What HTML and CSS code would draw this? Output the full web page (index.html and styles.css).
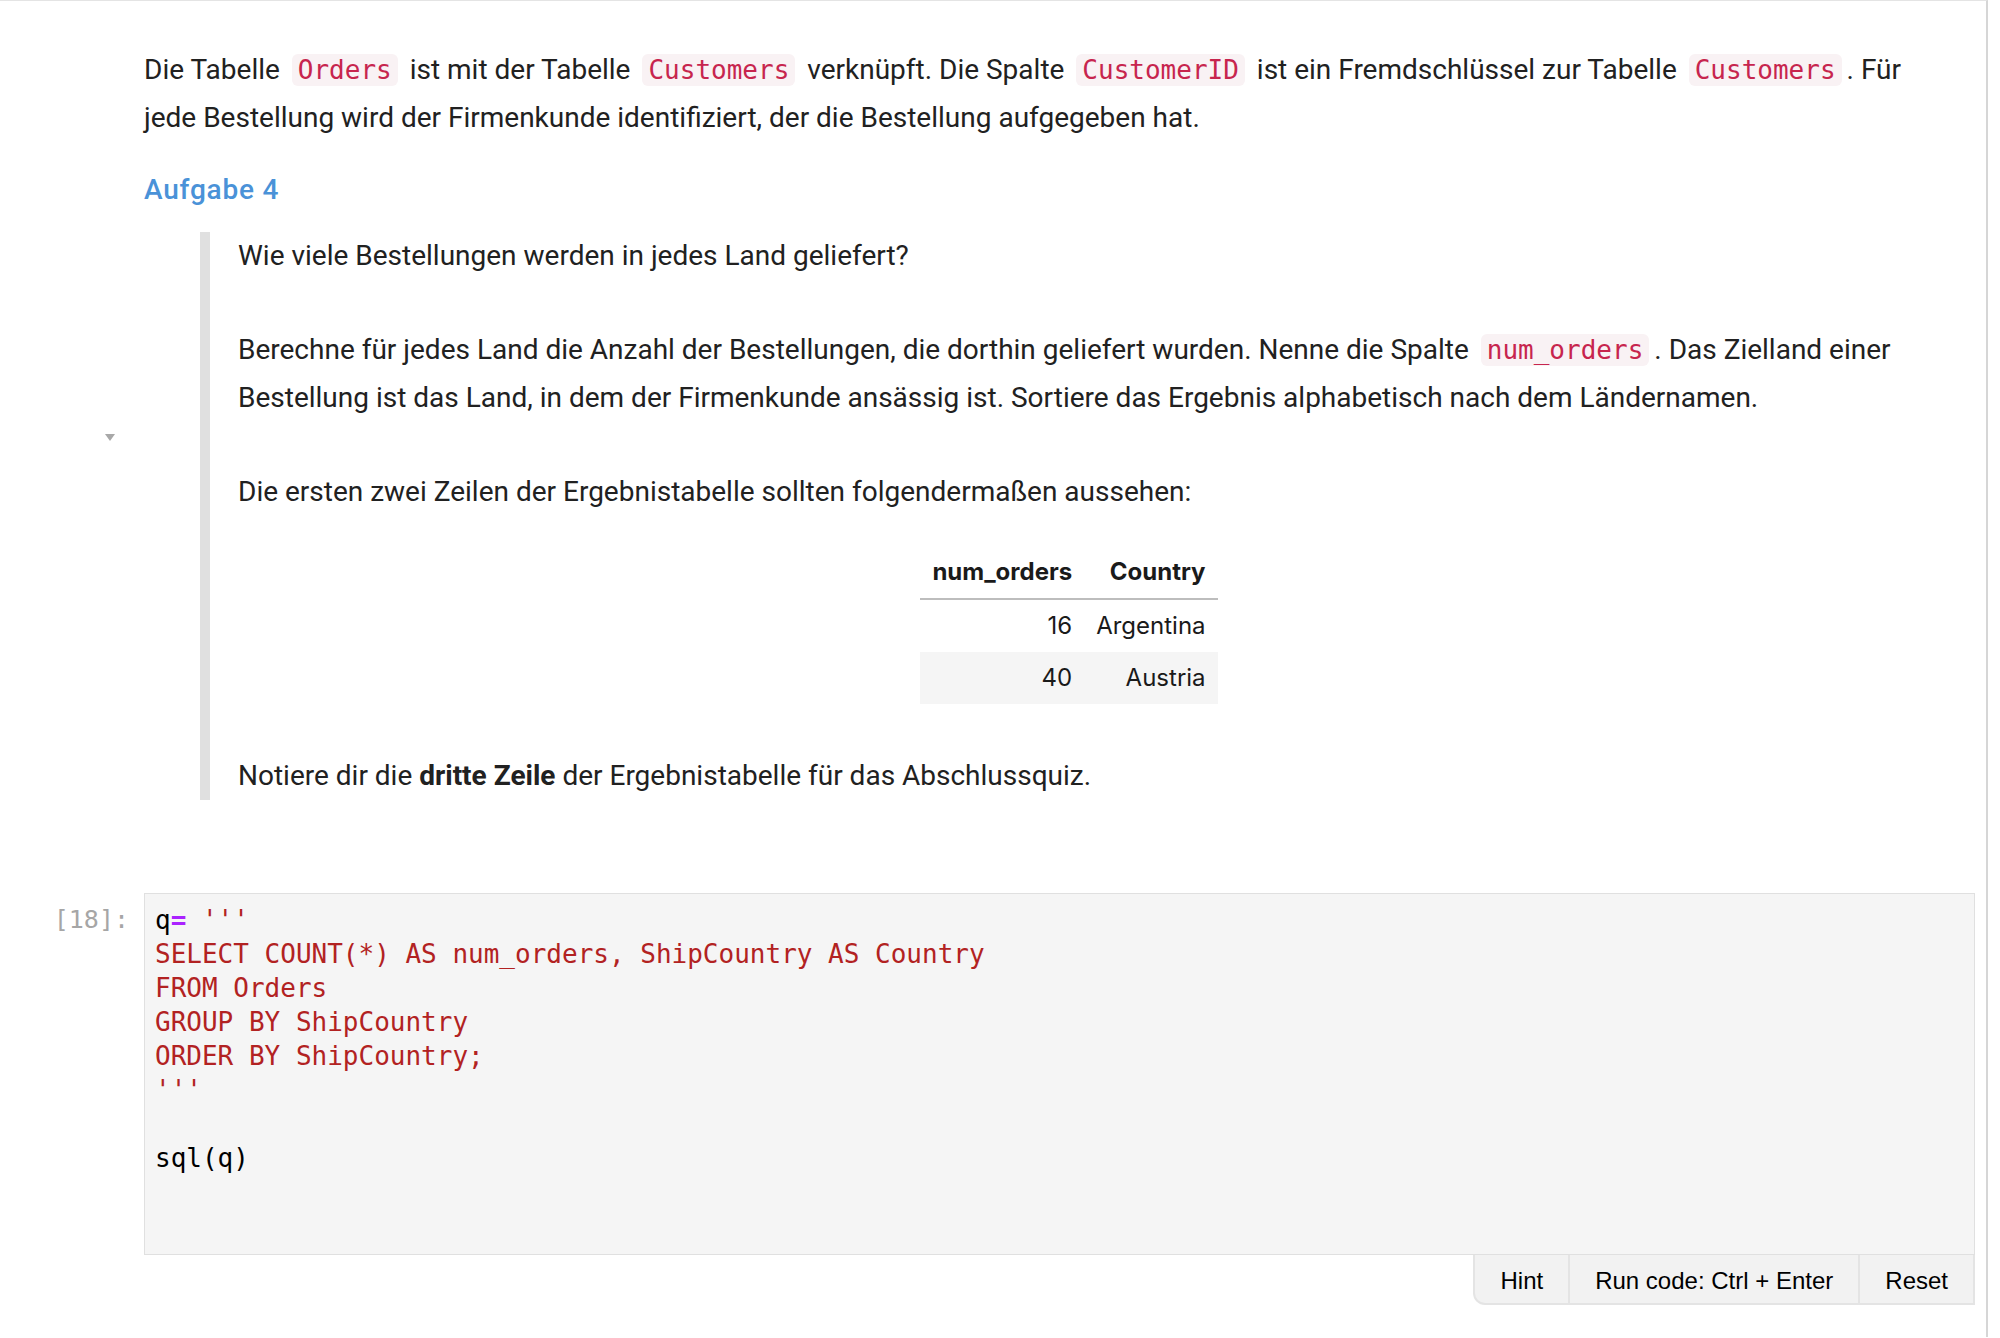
FILE: index.html
```html
<!DOCTYPE html>
<html lang="de">
<head>
<meta charset="utf-8">
<title>Notebook</title>
<link rel="stylesheet" href="styles.css">
</head>
<body>
<div class="panel">
  <div class="cell md-cell">
    <div class="gutter"><span class="caret"></span></div>
    <div class="md">
      <p>Die Tabelle <code>Orders</code> ist mit der Tabelle <code>Customers</code> verknüpft. Die Spalte <code>CustomerID</code> ist ein Fremdschlüssel zur Tabelle <code>Customers</code>. Für jede Bestellung wird der Firmenkunde identifiziert, der die Bestellung aufgegeben hat.</p>
      <h4 class="task">Aufgabe 4</h4>
      <blockquote class="quote">
        <p class="qp">Wie viele Bestellungen werden in jedes Land geliefert?</p>
        <p class="qp">Berechne für jedes Land die Anzahl der Bestellungen, die dorthin geliefert wurden. Nenne die Spalte <code>num_orders</code>. Das Zielland einer Bestellung ist das Land, in dem der Firmenkunde ansässig ist. Sortiere das Ergebnis alphabetisch nach dem Ländernamen.</p>
        <p class="qp">Die ersten zwei Zeilen der Ergebnistabelle sollten folgendermaßen aussehen:</p>
        <table class="result">
          <thead>
            <tr><th>num_orders</th><th>Country</th></tr>
          </thead>
          <tbody>
            <tr><td>16</td><td>Argentina</td></tr>
            <tr><td>40</td><td>Austria</td></tr>
          </tbody>
        </table>
        <p class="qp last">Notiere dir die <strong>dritte Zeile</strong> der Ergebnistabelle für das Abschlussquiz.</p>
      </blockquote>
    </div>
  </div>
  <div class="cell code-cell">
    <div class="prompt">[18]:</div>
    <div class="code-wrap">
<pre class="code"><span class="var">q</span><span class="op">=</span> <span class="str">'''</span>
<span class="str">SELECT COUNT(*) AS num_orders, ShipCountry AS Country</span>
<span class="str">FROM Orders</span>
<span class="str">GROUP BY ShipCountry</span>
<span class="str">ORDER BY ShipCountry;</span>
<span class="str">'''</span>

<span class="var">sql(q)</span>


</pre>
      <div class="buttons">
        <button class="btn first">Hint</button>
        <button class="btn">Run code: Ctrl + Enter</button>
        <button class="btn">Reset</button>
      </div>
    </div>
  </div>
</div>
</body>
</html>
```
FILE: styles.css
```css
html, body {
  margin: 0;
  padding: 0;
  background: #ffffff;
}

body {
  font-family: Roboto, "Noto Sans", sans-serif;
  color: #212121;
}

.panel {
  width: 1988px;
  min-height: 1337px;
  box-sizing: border-box;
  border-top: 1px solid #e4e4e4;
  border-right: 2px solid #d6d6d6;
}

.cell {
  display: flex;
}

.gutter {
  width: 144px;
  flex: none;
  display: flex;
  align-items: center;
  justify-content: flex-end;
  box-sizing: border-box;
  padding-right: 29px;
}

.caret {
  width: 0;
  height: 0;
  border-left: 5px solid transparent;
  border-right: 5px solid transparent;
  border-top: 7px solid #a8a8a8;
}

.md {
  width: 1800px;
  padding: 45px 0 74px;
  font-size: 28px;
  line-height: 48px;
}

.md p {
  margin: 0;
}

.md code {
  font-family: "DejaVu Sans Mono", monospace;
  font-size: 26px;
  line-height: 30px;
  color: #c7254e;
  background: #f9f2f4;
  padding: 1px 6px;
  margin: 0 5px;
  border-radius: 6px;
}

.task {
  margin: 24px 0 0;
  font-size: 28px;
  line-height: 48px;
  font-weight: 500;
  letter-spacing: 0.8px;
  color: #4a92d8;
}

.quote {
  margin: 18px 16px 0 56px;
  padding: 0 28px;
  border-left: 10px solid #e0e0e0;
}

.md .qp + .qp {
  margin-top: 46px;
}

.result {
  margin: 30px auto 48px;
  border-collapse: collapse;
  font-family: Inter, Roboto, sans-serif;
  font-size: 24px;
  line-height: 28px;
  color: #1a1a1a;
}

.result th,
.result td {
  padding: 12px 12px;
  text-align: right;
}

.result th {
  font-weight: 700;
  border-bottom: 2px solid #bdbdbd;
}

.result tbody tr:nth-child(even) {
  background: #f5f5f5;
}

.code-cell {
  margin-top: 19px;
}

.prompt {
  width: 144px;
  flex: none;
  box-sizing: border-box;
  padding: 10px 15px 0 0;
  text-align: right;
  font-family: "DejaVu Sans Mono", monospace;
  font-size: 25px;
  line-height: 34px;
  color: #a6a6a6;
}

.code-wrap {
  width: 1831px;
  display: flex;
  flex-direction: column;
}

.code {
  margin: 0;
  padding: 9px 10px 11px;
  border: 1px solid #e0e0e0;
  background: #f5f5f5;
  font-family: "DejaVu Sans Mono", monospace;
  font-size: 26px;
  line-height: 34px;
  color: #000000;
}

.code .str {
  color: #b22222;
}

.code .op {
  color: #aa22ff;
  font-weight: 700;
}

.buttons {
  display: flex;
  justify-content: flex-end;
}

.btn {
  font-family: "Liberation Sans", Arial, sans-serif;
  font-size: 24px;
  color: #000000;
  background: #f2f2f2;
  border: 2px solid #e4e4e4;
  border-top: none;
  border-left: none;
  height: 50px;
  padding: 3px 25px 0;
  margin: 0;
}

.btn.first {
  border-left: 2px solid #e4e4e4;
  border-bottom-left-radius: 12px;
}
```
